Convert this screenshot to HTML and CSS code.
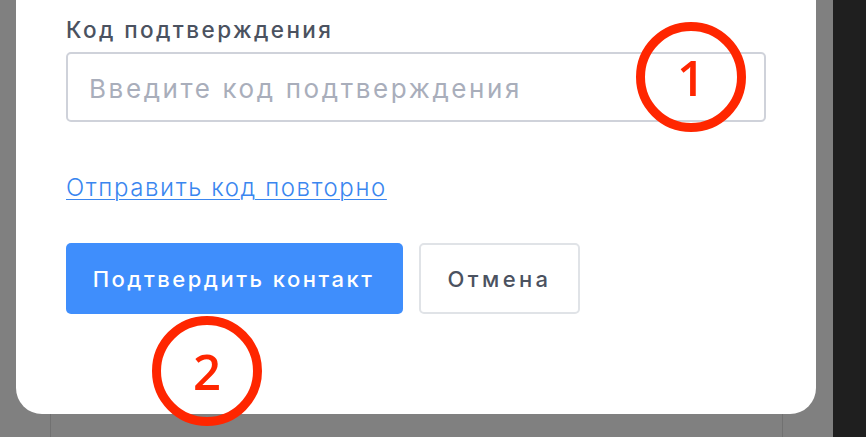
FILE: index.html
```html
<!DOCTYPE html>
<html lang="ru">
<head>
    <meta charset="UTF-8">
    <meta name="viewport" content="width=device-width, initial-scale=1.0">
    <title>Подтверждение контакта</title>
    <link rel="stylesheet" href="styles.css">
</head>
<body>
    <div class="screen">
        <div class="backdrop">
            <!-- Модальное окно -->
            <div class="confirm-modal">
                <div class="field-group">
                    <label for="confirmCode">Код подтверждения</label>
                    <input type="text" id="confirmCode" placeholder="Введите код подтверждения" autocomplete="off">
                    <span class="mark mark-one">1</span>
                </div>
                <a href="#" class="resend-link">Отправить код повторно</a>
                <div class="modal-actions">
                    <button class="btn btn-primary">Подтвердить контакт</button>
                    <button class="btn btn-secondary">Отмена</button>
                    <span class="mark mark-two">2</span>
                </div>
            </div>
            <!-- Карточка страницы под оверлеем -->
            <div class="page-card"></div>
        </div>
        <div class="side-strip"></div>
    </div>
</body>
</html>
```

FILE: styles.css
```css
* {
    box-sizing: border-box;
}

body {
    margin: 0;
    background: #808080;
    font-family: 'Inter', 'Noto Sans', sans-serif;
    overflow: hidden;
}

.screen {
    display: flex;
    height: 437px;
}

/* Затемнённая область */
.backdrop {
    width: 833px;
    padding-left: 16px;
    display: flex;
    flex-direction: column;
}

.side-strip {
    flex: 1;
    background: #1f1f1f;
}

/* Модальное окно */
.confirm-modal {
    position: relative;
    width: 800px;
    height: 414px;
    background: #fff;
    border-radius: 0 0 26px 26px;
    padding: 14px 50px 0 50px;
}

.field-group {
    position: relative;
    display: flex;
    flex-direction: column;
}

.field-group label {
    font-size: 22.5px;
    font-weight: 500;
    letter-spacing: 2.4px;
    color: #4b5260;
    line-height: 32px;
    margin-bottom: 6px;
}

.field-group input {
    width: 100%;
    height: 70px;
    border: 2px solid #cfd2da;
    border-radius: 5px;
    padding: 2px 21px 0;
    font-family: inherit;
    font-size: 26px;
    letter-spacing: 2.6px;
    color: #333;
    outline: none;
}

.field-group input::placeholder {
    color: #a9aebb;
}

.resend-link {
    display: inline-block;
    align-self: flex-start;
    margin-top: 52px;
    font-size: 24px;
    font-weight: 300;
    letter-spacing: 1.6px;
    line-height: 28px;
    color: #3a86ef;
    text-decoration: underline;
    text-underline-offset: 3px;
    text-decoration-thickness: 1px;
}

.modal-actions {
    position: relative;
    display: flex;
    gap: 16px;
    margin-top: 41px;
}

.btn {
    height: 71px;
    border-radius: 5px;
    font-family: inherit;
    font-size: 22px;
    font-weight: 500;
    letter-spacing: 2.5px;
    cursor: pointer;
}

.btn-primary {
    width: 337px;
    background: #3f8efc;
    border: none;
    color: #fff;
    padding-left: 4px;
}

.btn-secondary {
    width: 161px;
    background: #fff;
    border: 2px solid #e0e3e7;
    color: #4b5260;
    letter-spacing: 3.4px;
    padding-left: 6px;
}

/* Пометки поверх интерфейса */
.mark {
    position: absolute;
    width: 110px;
    height: 110px;
    border: 9px solid #ff2600;
    border-radius: 50%;
    display: flex;
    align-items: center;
    justify-content: center;
    color: #ff2600;
    font-family: 'Open Sans', sans-serif;
    font-size: 49px;
    font-weight: 600;
}

.mark-one {
    left: 570px;
    top: 8px;
}

.mark-two {
    left: 86px;
    top: 73px;
}

.page-card {
    flex: 1;
    margin-left: 34px;
    width: 733px;
    border-left: 1px solid #717171;
    border-right: 1px solid #717171;
}
```
